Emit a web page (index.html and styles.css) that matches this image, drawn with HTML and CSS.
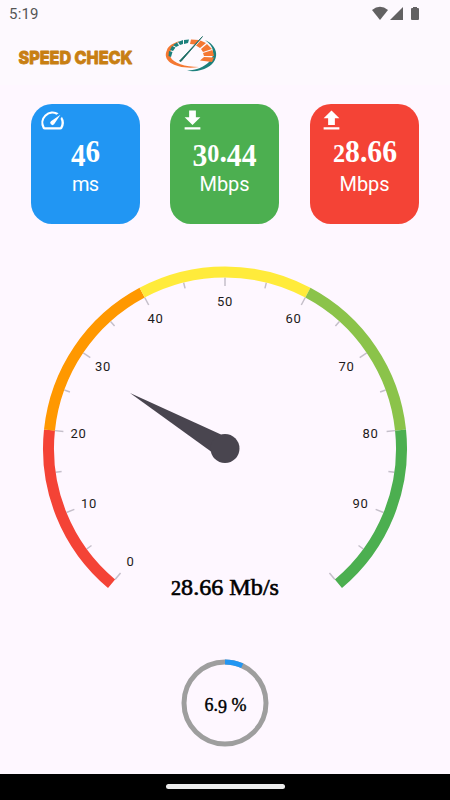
FILE: index.html
```html
<!DOCTYPE html>
<html lang="en">
<head>
<meta charset="utf-8">
<title>Speed Check</title>
<link rel="stylesheet" href="styles.css">
</head>
<body>
<div class="screen">
  <header class="top">
    <div class="status">
      <span class="clock">5:19</span>
      <svg class="system" width="50" height="16" viewBox="0 0 50 16">
        <path d="M0 4Q8-2.500 16 4L8 14Z"/><path d="M18 14L31 1V14Z"/><path d="M39 3Q39 2 40 2H41V1H45V2H46Q47 2 47 3V13Q47 14 46 14H40Q39 14 39 13Z"/>
      </svg>
    </div>
    <div class="brand">
      <svg class="title" width="120" height="26" viewBox="0 0 120 26"><text x="1.500" y="21.500" textLength="114" lengthAdjust="spacingAndGlyphs">SPEED CHECK</text></svg>
      <svg class="logo" width="54" height="38" viewBox="0 0 54 38">
        <path class="teal" d="M41 4C57 11 56 29 37 34C32 35.500 27 35.500 23 34.500C33 34 40 31 45 26C52 19 50 10 41 4Z"/>
        <path class="orange" d="M3 14C-3 26 14 34 35 31C21 31 9 27 6.500 21C5 16 8 9 16 5C9 7 4 10 3 14Z"/>
        <path class="teal" d="M4.500 20L5 15L8.500 16L7 21ZM6 14L8 10L11.500 11.500L9 15ZM9 9L13 6.500L15 9.500L12 11ZM14 6L19 4L19 8L16 9ZM20 4L25 3.500L24 7L20 8Z"/>
        <path class="orange" d="M27 3.500L35 4L31 8.500L26 8ZM36.500 4.500L42 7L36 12L32 9.500ZM43 8L48 13L39 16L37 13ZM48.500 14L50 20L40 20L39 17ZM40 21L50 21.500L48 26L36 24.500Z"/>
        <path class="needle" d="M38.500 .5L17 25.500L15.500 25Z"/>
      </svg>
    </div>
  </header>

  <main>
    <section class="cards">
      <article class="card ping">
        <svg class="icon" width="27" height="27" viewBox="0 0 24 24"><path d="M20.380 8.570l-1.230 1.850a8 8 0 0 1-.220 7.580H5.070A8 8 0 0 1 15.580 6.850l1.850-1.230A10 10 0 0 0 3.350 19a2 2 0 0 0 1.720 1h13.850a2 2 0 0 0 1.740-1 10 10 0 0 0-.270-10.440zM10.590 15.410a2 2 0 0 0 2.830 0l5.660-8.490-8.490 5.660a2 2 0 0 0 0 2.830z"/></svg>
        <svg class="reading" width="109" height="60" viewBox="0 0 109 60"><text class="num" x="40" y="32" textLength="29" lengthAdjust="spacingAndGlyphs"><tspan dy="4">4</tspan><tspan dy="-4">6</tspan></text><text class="unit" x="41" y="61" textLength="27">ms</text></svg>
      </article>
      <article class="card down">
        <svg class="icon" width="27" height="27" viewBox="0 0 24 24"><path d="M19 9h-4V3H9v6H5l7 7 7-7zM5 18v2h14v-2H5z"/></svg>
        <svg class="reading" width="109" height="60" viewBox="0 0 109 60"><text class="num" x="22.500" y="32" textLength="64" lengthAdjust="spacingAndGlyphs"><tspan dy="4">3</tspan><tspan class="low" dy="-4">0</tspan>.<tspan dy="4">44</tspan></text><text class="unit" x="29.500" y="61" textLength="50">Mbps</text></svg>
      </article>
      <article class="card up">
        <svg class="icon" width="27" height="27" viewBox="0 0 24 24"><path d="M9 16h6v-6h4l-7-7-7 7h4v6zM5 18v2h14v-2H5z"/></svg>
        <svg class="reading" width="109" height="60" viewBox="0 0 109 60"><text class="num" x="23" y="32" textLength="64" lengthAdjust="spacingAndGlyphs"><tspan class="low">2</tspan>8.66</text><text class="unit" x="29.500" y="61" textLength="50">Mbps</text></svg>
      </article>
    </section>

    <svg class="gauge" width="450" height="360" viewBox="-225 -188.500 450 360">
      <g class="ticks">
        <path transform="rotate(130)" d="M162.500 0H171"/><path transform="rotate(158)" d="M162.500 0H171"/><path transform="rotate(186)" d="M162.500 0H171"/><path transform="rotate(214)" d="M162.500 0H171"/><path transform="rotate(242)" d="M162.500 0H171"/><path transform="rotate(270)" d="M162.500 0H171"/><path transform="rotate(298)" d="M162.500 0H171"/><path transform="rotate(326)" d="M162.500 0H171"/><path transform="rotate(354)" d="M162.500 0H171"/><path transform="rotate(22)" d="M162.500 0H171"/><path transform="rotate(50)" d="M162.500 0H171"/>
        <path transform="rotate(144)" d="M165 0H171"/><path transform="rotate(172)" d="M165 0H171"/><path transform="rotate(200)" d="M165 0H171"/><path transform="rotate(228)" d="M165 0H171"/><path transform="rotate(256)" d="M165 0H171"/><path transform="rotate(284)" d="M165 0H171"/><path transform="rotate(312)" d="M165 0H171"/><path transform="rotate(340)" d="M165 0H171"/><path transform="rotate(8)" d="M165 0H171"/><path transform="rotate(36)" d="M165 0H171"/>
      </g>
      <g class="ranges">
        <circle class="r1" r="176.500" pathLength="360" transform="rotate(130)"/>
        <circle class="r2" r="176.500" pathLength="360" transform="rotate(186)"/>
        <circle class="r3" r="176.500" pathLength="360" transform="rotate(242)"/>
        <circle class="r4" r="176.500" pathLength="360" transform="rotate(298)"/>
        <circle class="r5" r="176.500" pathLength="360" transform="rotate(354)"/>
      </g>
      <g class="labels">
        <text x="-94.500" y="117">0</text><text x="-136" y="59.500">10</text><text x="-146.500" y="-11">20</text><text x="-122" y="-77.500">30</text><text x="-69.500" y="-125.500">40</text><text x="0" y="-143">50</text><text x="68.500" y="-125.500">60</text><text x="121.500" y="-77.500">70</text><text x="145.500" y="-11">80</text><text x="135.500" y="59.500">90</text>
      </g>
      <g class="pointer"><path d="M-95-55.500L-4-14L-14 3Z"/><circle r="14.500"/></g>
      <text class="speed" x="-54" y="146" textLength="108" lengthAdjust="spacingAndGlyphs"><tspan class="low">2</tspan>8.66 Mb/s</text>
    </svg>

    <svg class="progress" width="88" height="88" viewBox="-44 -44 88 88">
      <circle class="track" r="41"/>
      <circle class="value" r="41" pathLength="100" transform="rotate(-90)"/>
      <text x="-20.500" y="7.500">6.<tspan dy="2">9</tspan><tspan dy="-2"> %</tspan></text>
    </svg>
  </main>
  <footer class="navbar"><span class="handle"></span></footer>
</div>
</body>
</html>
```

FILE: styles.css
```css
* { box-sizing: border-box; }
body { margin: 0; background: #fef7ff; font-family: Roboto, sans-serif; }
svg { display: block; overflow: visible; }
.screen { width: 450px; height: 800px; display: flex; flex-direction: column; overflow: hidden; }
.top { height: 85px; background: #fdf9fe; }
.status { height: 28px; padding: 0 28px 0 9px; display: flex; align-items: center; justify-content: space-between; }
.clock { font-size: 15px; color: #555; letter-spacing: .2px; }
.system { fill: #626162; margin-top: -1px; }
.brand { display: flex; align-items: center; height: 54px; padding-left: 17px; gap: 27px; }
.title text { font: 800 18px Inter, sans-serif; fill: #c87f12; stroke: #c87f12; stroke-width: .9; stroke-linejoin: round; }
.teal { fill: #1c807c; }
.orange { fill: #f47832; }
.needle { fill: #17685f; stroke: #17685f; stroke-width: .8; }
main { flex: 1; }
.cards { display: flex; gap: 30.400px; padding: 19px 0 0 30.500px; }
.card { width: 109.300px; height: 120px; border-radius: 21px; padding-top: 3px; color: #fff; }
.ping { background: #2196f3; }
.down { background: #4caf50; }
.up { background: #f44336; }
.icon { margin-left: 8.500px; fill: #fff; }
.reading { margin-top: -4px; fill: #fff; }
.num { font: bold 32px "Liberation Serif", serif; }
.num .low { font-size: 26px; }
.unit { font: 20px Roboto, sans-serif; }
.gauge { margin-top: 36px; }
.ticks { stroke: #c5bfca; stroke-width: 1.500; fill: none; }
.ranges { fill: none; stroke-width: 11; stroke-dasharray: 56 304; }
.r1 { stroke: #f44336; }
.r2 { stroke: #ff9800; }
.r3 { stroke: #ffeb3b; }
.r4 { stroke: #8bc34a; }
.r5 { stroke: #4caf50; }
.labels { font-size: 13px; letter-spacing: .7px; text-anchor: middle; fill: #1d1b20; }
.pointer { fill: #49454f; }
.speed { font: 24px "Liberation Serif", serif; fill: #000; stroke: #000; stroke-width: .6; }
.speed .low { font-size: 20px; }
.progress { margin: 38.500px auto 0; fill: none; }
.track { stroke: #9e9e9e; stroke-width: 5; }
.value { stroke: #2196f3; stroke-width: 5; stroke-dasharray: 6.900 93.100; }
.progress text { font: 18px "Liberation Serif", serif; fill: #000; stroke: #000; stroke-width: .4; }
.navbar { height: 26px; background: #000; display: flex; justify-content: center; padding-top: 10px; }
.handle { width: 119px; height: 5px; border-radius: 3px; background: #ececec; }
```
